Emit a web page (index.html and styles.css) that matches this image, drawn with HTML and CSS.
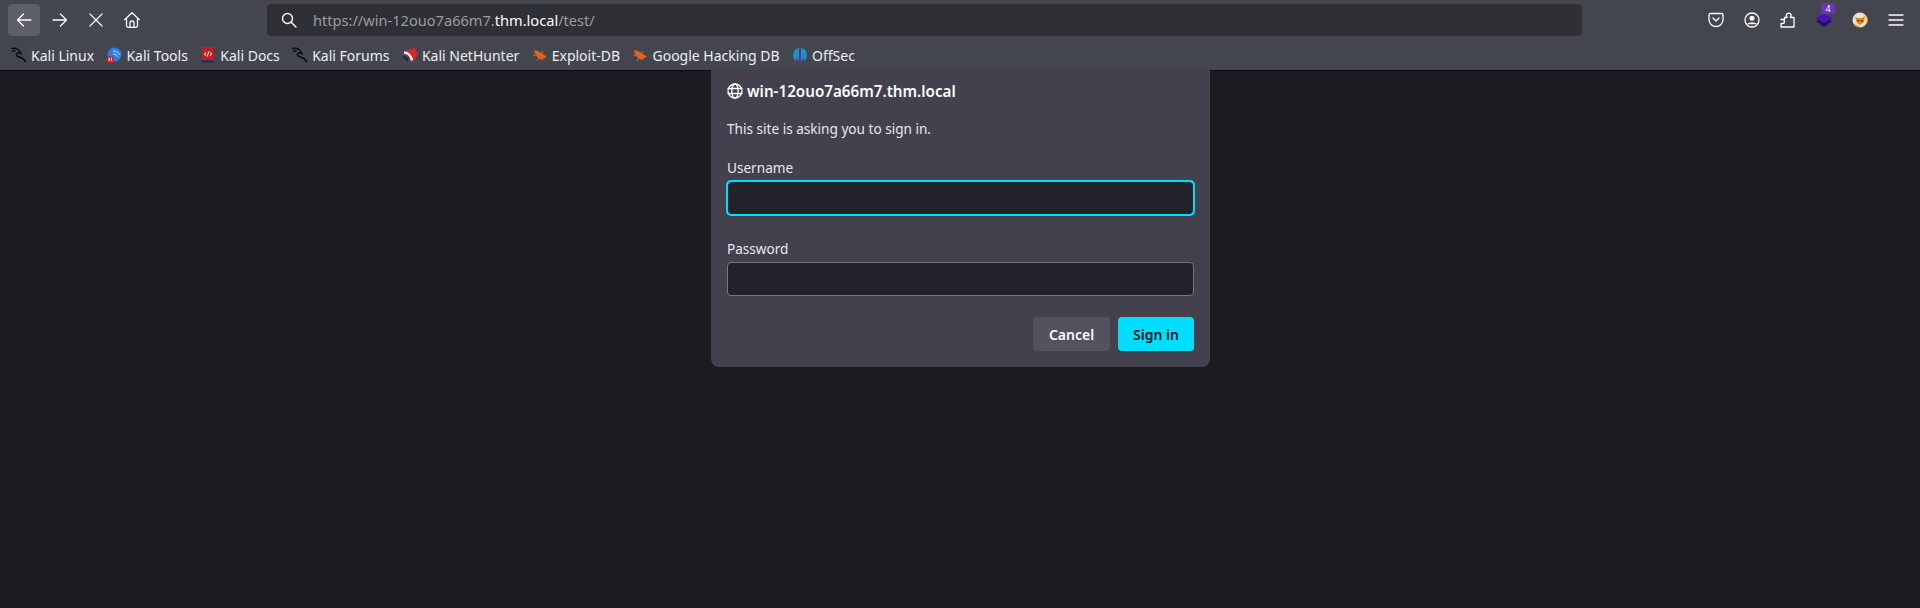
FILE: index.html
```html
<!DOCTYPE html>
<html lang="en">
<head>
    <meta charset="UTF-8">
    <title>Sign in</title>
    <link rel="stylesheet" href="styles.css">
</head>
<body>
    <header class="chrome">
        <div class="toolbar">
            <div class="nav-buttons">
                <button class="tool-btn active" aria-label="Back">
                    <svg width="16" height="16" viewBox="0 0 16 16"><path d="M15 8H1.500M7.500 2 1.500 8l6 6"/></svg>
                </button>
                <button class="tool-btn" aria-label="Forward">
                    <svg width="16" height="16" viewBox="0 0 16 16"><path d="M1 8h13.500M8.500 2l6 6-6 6"/></svg>
                </button>
                <button class="tool-btn" aria-label="Stop">
                    <svg width="16" height="16" viewBox="0 0 16 16"><path d="M2 2l12 12M14 2 2 14"/></svg>
                </button>
                <button class="tool-btn" aria-label="Home">
                    <svg width="16" height="16" viewBox="0 0 16 16"><path d="M.8 7.500 8 .8l7.200 6.700M2.500 6.500v7A1.800 1.800 0 0 0 4.300 15.300h7.400a1.800 1.800 0 0 0 1.800-1.800v-7M6 15.300v-4.300a2 2 0 0 1 4 0v4.300"/></svg>
                </button>
            </div>
            <div class="urlbar">
                <svg class="search-icon" width="16" height="16" viewBox="0 0 16 16"><circle cx="6.500" cy="6.500" r="5"/><path d="M10.200 10.200 15 15"/></svg>
                <span class="url">https://win-12ouo7a66m7.<b>thm.local</b>/test/</span>
            </div>
            <div class="tray">
                <svg class="tray-icon" width="16" height="16" viewBox="0 0 16 16"><path d="M2.500 1.500h11a1.500 1.500 0 0 1 1.500 1.500v4.500a7 7 0 0 1-14 0V3a1.500 1.500 0 0 1 1.500-1.500zM5 6l3 3 3-3"/></svg>
                <svg class="tray-icon" width="16" height="16" viewBox="0 0 16 16"><circle cx="8" cy="8" r="7"/><circle class="solid" cx="8" cy="6.200" r="2.500"/><path class="solid" d="M3.500 11.500c1-1.500 8-1.500 9 0v.8h-9z"/></svg>
                <svg class="tray-icon" width="16" height="16" viewBox="0 0 16 16"><path d="M1 7.500h3.500V5.500H7a1 1 0 0 0 0-.5 2.300 2.300 0 1 1 3.500 0 1 1 0 0 0 0 .5h3.500v9.500H1v-3.500h1.500a2 2 0 0 0 0-4z"/></svg>
                <div class="ext-stack">
                    <svg width="18" height="16" viewBox="0 0 18 16"><path fill="#1f0f70" d="M9 4 17 9 9 15 1 9z"/><path fill="#4a16b0" d="M9 1 17 6 9 11 1 6z"/></svg>
                    <span class="ext-badge">4</span>
                </div>
                <svg width="16" height="16" viewBox="0 0 16 16"><circle cx="8" cy="8" r="7.500" fill="#e8e4dc"/><path fill="none" stroke="#e08a14" d="M11 1.500a7 7 0 0 1 0 13M3 12a6 6 0 0 0 5 3"/><path fill="#e8860f" d="M3 5l3 1h4l3-2-1 6-4 3-3-2z"/><path fill="#5a3410" d="M5.500 8h2v1.500h-2zM9 8h2v1.500H9z"/></svg>
                <svg class="tray-icon" width="16" height="16" viewBox="0 0 16 16"><path d="M1 3h14M1 8h14M1 13h14"/></svg>
            </div>
        </div>
        <nav class="bookmarks">
            <a class="bookmark"><svg class="fav" width="16" height="16" viewBox="0 0 16 16"><path class="kali" d="M0 1.500c3-.5 5-.5 7 1 1.500 1 2.500 2.500 3 4-2-1-4-1-4.500.5-.5 1.500 1 2.500 3 3 3 .8 5 2.500 6.500 5M1 4.500l3.500-1"/></svg>Kali Linux</a>
            <a class="bookmark"><svg class="fav" width="16" height="16" viewBox="0 0 16 16"><circle cx="8.500" cy="7.500" r="7" fill="#2a7de1"/><path d="M7 4c3 0 5 1 7 4M7 7c2 0 4 1 5 3" stroke="#cfe4fb" fill="none"/><rect x="1" y="9" width="7" height="7" rx="3.500" fill="#d9232e"/><path d="M3.200 10.800v3M5.500 10.800v3" stroke="#fff" fill="none"/></svg>Kali Tools</a>
            <a class="bookmark"><svg class="fav" width="16" height="16" viewBox="0 0 16 16"><rect x="2" y="0" width="12" height="15" fill="#c91a20"/><rect x="2" y="13" width="12" height="3" fill="#2a3350"/><path d="M6 5 4.500 7 6 9M10 5l1.500 2L10 9M8.800 4.500 7.200 9.500" stroke="#fff" fill="none"/></svg>Kali Docs</a>
            <a class="bookmark"><svg class="fav" width="16" height="16" viewBox="0 0 16 16"><path class="kali" d="M0 1.500c3-.5 5-.5 7 1 1.500 1 2.500 2.500 3 4-2-1-4-1-4.500.5-.5 1.500 1 2.500 3 3 3 .8 5 2.500 6.500 5M1 4.500l3.500-1"/></svg>Kali Forums</a>
            <a class="bookmark"><svg class="fav" width="16" height="16" viewBox="0 0 16 16"><path fill="#d8262f" d="M3 4 13 1l3 6-5 8z"/><path fill="none" stroke="#f2f2f2" stroke-width="2.500" d="M2 5.500c4 0 7 3.500 8 8"/><path fill="none" stroke="#20222a" stroke-width="1.500" d="M1 10c2 0 4 1.500 4.500 4"/></svg>Kali NetHunter</a>
            <a class="bookmark"><svg class="fav" width="16" height="16" viewBox="0 0 16 16"><path fill="#e8601c" d="M2 3l4 1 5 3 4 3-3 1-2 2-4-2-3-4z"/><path stroke="#e8601c" fill="none" d="M1 8l3 1M5 14l2-3M11 4 9 7"/></svg>Exploit-DB</a>
            <a class="bookmark"><svg class="fav" width="16" height="16" viewBox="0 0 16 16"><path fill="#e8601c" d="M2 3l4 1 5 3 4 3-3 1-2 2-4-2-3-4z"/><path stroke="#e8601c" fill="none" d="M1 8l3 1M5 14l2-3M11 4 9 7"/></svg>Google Hacking DB</a>
            <a class="bookmark"><svg class="fav" width="16" height="16" viewBox="0 0 16 16"><path fill="#1f8fc4" d="M7 .8v12l-2.500 1.200C-.5 12-.5 3 7 .8z"/><path fill="#1f8fc4" d="M9 .8v12l2.500 1.200C16.500 12 16.500 3 9 .8z"/><path fill="#5a2fd0" d="M7.500 5h1v11h-1zM4.500 10h1v4h-1zM10.500 10h1v4h-1z"/></svg>OffSec</a>
        </nav>
    </header>

    <main class="content">
        <form class="dialog">
            <h1 class="dialog-title">
                <svg class="globe" width="16" height="16" viewBox="0 0 16 16"><circle cx="8" cy="8" r="7"/><ellipse cx="8" cy="8" rx="3.200" ry="7"/><path d="M1 5.500h14M1 10.500h14"/></svg>
                win-12ouo7a66m7.thm.local
            </h1>
            <p class="dialog-msg">This site is asking you to sign in.</p>
            <label class="field-label" for="username">Username</label>
            <input class="field focused" id="username" type="text">
            <label class="field-label second" for="password">Password</label>
            <input class="field" id="password" type="password">
            <div class="dialog-actions">
                <button type="button" class="btn">Cancel</button>
                <button type="button" class="btn primary">Sign in</button>
            </div>
        </form>
    </main>
</body>
</html>
```

FILE: styles.css
```css
:root {
    --chrome: #43464e;
    --page: #1c1b22;
    --dialog: #42414d;
    --input: #23222b;
    --accent: #00ddff;
    --text: #fbfbfe;
}
* {
    box-sizing: border-box;
}
html, body {
    height: 100%;
}
body {
    margin: 0;
    display: flex;
    flex-direction: column;
    overflow: hidden;
    background: var(--page);
    color: var(--text);
    font-family: "Noto Sans", sans-serif;
    font-size: 14px;
}
svg {
    display: block;
    flex: none;
}

/* browser chrome */
.chrome {
    height: 71px;
    flex: none;
    background: var(--chrome);
    border-bottom: 1px solid #0c0c0d;
}
.toolbar {
    height: 40px;
    padding: 4px 0 0 8px;
    display: flex;
}
.nav-buttons {
    display: flex;
    gap: 4px;
    width: 259px;
}
.tool-btn {
    width: 32px;
    height: 32px;
    padding: 0;
    display: flex;
    align-items: center;
    justify-content: center;
    background: none;
    border: 0;
    border-radius: 4px;
}
.tool-btn.active {
    background: #5c5f66;
}
.tool-btn svg, .search-icon, .tray-icon, .globe {
    fill: none;
    stroke: var(--text);
    stroke-width: 1.300;
    stroke-linecap: round;
    stroke-linejoin: round;
}
.urlbar {
    width: 1315px;
    height: 32px;
    display: flex;
    align-items: center;
    gap: 16px;
    padding-left: 14px;
    background: #2f3035;
    border-radius: 4px;
}
.search-icon {
    stroke-width: 1.400;
}
.url {
    font-size: 14.6px;
    color: #9a9ba0;
}
.url b {
    font-weight: 400;
    color: var(--text);
}
.tray {
    flex: 1;
    display: flex;
    align-items: center;
    justify-content: flex-end;
    gap: 20px;
    padding-right: 16px;
    height: 32px;
}
.tray .solid {
    fill: var(--text);
    stroke: none;
}
.ext-stack {
    position: relative;
    width: 18px;
    height: 16px;
    margin: 0 -1px;
}
.ext-badge {
    position: absolute;
    top: -9px;
    left: 6px;
    width: 14px;
    height: 11px;
    background: #6a35b8;
    border-radius: 2px;
    font-size: 9px;
    line-height: 11px;
    text-align: center;
}
.bookmarks {
    height: 30px;
    padding: 0 0 0 11px;
    display: flex;
    align-items: center;
    gap: 12.4px;
}
.bookmark {
    display: flex;
    align-items: center;
    gap: 4px;
    font-size: 14px;
    color: #eeeef0;
    white-space: nowrap;
}
.kali {
    fill: none;
    stroke: #0c0c10;
    stroke-width: 1.500;
}

/* auth prompt */
.content {
    flex: 1;
    display: flex;
    justify-content: center;
    align-items: flex-start;
    padding-left: 1px;
}
.dialog {
    width: 499px;
    height: 297px;
    margin-top: -1px;
    padding: 0 16px;
    display: flex;
    flex-direction: column;
    background: var(--dialog);
    border-radius: 0 0 8px 8px;
}
.dialog-title {
    margin: 11px 0 0;
    height: 20px;
    display: flex;
    align-items: center;
    gap: 4px;
    font-size: 15.2px;
    font-weight: 600;
}
.dialog-msg {
    margin: 18px 0 0;
    height: 20px;
    line-height: 20px;
    font-size: 13.6px;
    color: #e8e8ec;
}
.field-label {
    margin-top: 19px;
    height: 20px;
    line-height: 20px;
    font-size: 13.6px;
    color: #e8e8ec;
}
.field-label.second {
    margin-top: 24px;
}
.field {
    height: 34px;
    margin-top: 3px;
    background: var(--input);
    border: 1px solid #77767f;
    border-radius: 4px;
    outline: none;
}
.focused {
    border-color: var(--accent);
    outline: 2px solid var(--accent);
    outline-offset: -1px;
}
.dialog-actions {
    margin-top: 21px;
    display: flex;
    justify-content: flex-end;
    gap: 8px;
}
.btn {
    width: 77px;
    height: 34px;
    padding: 0;
    background: #53525e;
    color: var(--text);
    border: 0;
    border-radius: 4px;
    font-family: inherit;
    font-size: 14px;
    font-weight: 600;
}
.btn.primary {
    width: 76px;
    background: var(--accent);
    color: #15141a;
}
```
